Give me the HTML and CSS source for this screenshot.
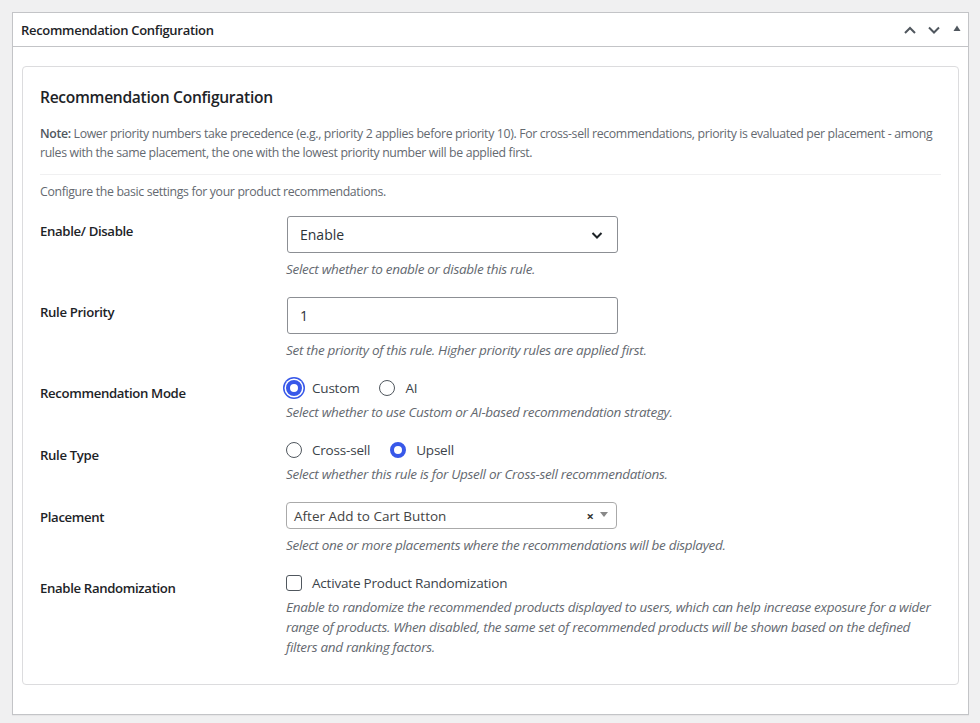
FILE: index.html
```html
<!DOCTYPE html>
<html lang="en">
<head>
    <meta charset="UTF-8">
    <meta name="viewport" content="width=device-width, initial-scale=1.0">
    <title>Recommendation Configuration</title>
    <link rel="stylesheet" href="styles.css">
</head>
<body>
    <div class="postbox">
        <div class="postbox-header">
            <h2 class="hndle">Recommendation Configuration</h2>
            <div class="handle-actions">
                <button class="handle-btn" type="button">
                    <svg width="14" height="14" viewBox="0 0 14 14"><path d="M2 10 L7 5 L12 10" fill="none" stroke="#50575e" stroke-width="2"/></svg>
                </button>
                <button class="handle-btn" type="button">
                    <svg width="14" height="14" viewBox="0 0 14 14"><path d="M2 4.5 L7 9.5 L12 4.5" fill="none" stroke="#50575e" stroke-width="2"/></svg>
                </button>
                <button class="handle-btn toggle" type="button">
                    <svg width="10" height="10" viewBox="0 0 10 10"><path d="M1.5 8 L5 2.5 L8.5 8 Z" fill="#50575e"/></svg>
                </button>
            </div>
        </div>
        <div class="inside">
            <div class="panel">
                <h3 class="panel-title">Recommendation Configuration</h3>
                <p class="note"><strong>Note:</strong> Lower priority numbers take precedence (e.g., priority 2 applies before priority 10). For cross-sell recommendations, priority is evaluated per placement - among rules with the same placement, the one with the lowest priority number will be applied first.</p>
                <p class="intro">Configure the basic settings for your product recommendations.</p>

                <table class="form-table">
                    <tr>
                        <th>Enable/ Disable</th>
                        <td>
                            <div class="select">
                                <span>Enable</span>
                                <svg width="14" height="14" viewBox="0 0 14 14"><path d="M2.5 5 L7 9.5 L11.5 5" fill="none" stroke="#1d2327" stroke-width="2"/></svg>
                            </div>
                            <p class="description">Select whether to enable or disable this rule.</p>
                        </td>
                    </tr>
                    <tr>
                        <th>Rule Priority</th>
                        <td>
                            <div class="input">1</div>
                            <p class="description">Set the priority of this rule. Higher priority rules are applied first.</p>
                        </td>
                    </tr>
                    <tr>
                        <th>Recommendation Mode</th>
                        <td>
                            <div class="choices">
                                <label class="choice"><span class="radio checked focus"></span>Custom</label>
                                <label class="choice"><span class="radio"></span>AI</label>
                            </div>
                            <p class="description tight">Select whether to use Custom or AI-based recommendation strategy.</p>
                        </td>
                    </tr>
                    <tr>
                        <th>Rule Type</th>
                        <td>
                            <div class="choices">
                                <label class="choice"><span class="radio"></span>Cross-sell</label>
                                <label class="choice"><span class="radio checked"></span>Upsell</label>
                            </div>
                            <p class="description tight">Select whether this rule is for Upsell or Cross-sell recommendations.</p>
                        </td>
                    </tr>
                    <tr>
                        <th>Placement</th>
                        <td>
                            <div class="select2">
                                <span>After Add to Cart Button</span>
                                <span class="clear">×</span>
                                <span class="arrow"></span>
                            </div>
                            <p class="description">Select one or more placements where the recommendations will be displayed.</p>
                        </td>
                    </tr>
                    <tr>
                        <th>Enable Randomization</th>
                        <td>
                            <label class="choice"><span class="checkbox"></span>Activate Product Randomization</label>
                            <p class="description tight">Enable to randomize the recommended products displayed to users, which can help increase exposure for a wider range of products. When disabled, the same set of recommended products will be shown based on the defined filters and ranking factors.</p>
                        </td>
                    </tr>
                </table>
            </div>
        </div>
    </div>
</body>
</html>
```

FILE: styles.css
```css
*{
    margin: 0;
    padding: 0;
    box-sizing: border-box;
}
body{
    background: #f0f0f1;
    font-family: "Open Sans", "Noto Sans", sans-serif;
    color: #3c434a;
    font-size: 13px;
    padding: 12px 11px 8px 12px;
}
.postbox{
    background: #fff;
    border: 1px solid #c3c4c7;
    box-shadow: 0 1px 1px rgba(0, 0, 0, 0.04);
}
.postbox-header{
    display: flex;
    align-items: center;
    justify-content: space-between;
    height: 34px;
    border-bottom: 1px solid #c3c4c7;
    padding-left: 8px;
}
.hndle{
    font-size: 13px;
    font-weight: 600;
    color: #1d2327;
    letter-spacing: -0.3px;
}
.handle-actions{
    display: flex;
    align-items: center;
    height: 100%;
}
.handle-btn{
    width: 24px;
    height: 33px;
    border: none;
    background: none;
    display: flex;
    align-items: center;
    justify-content: center;
}
.handle-btn.toggle{
    width: 22px;
    padding-bottom: 3px;
}
.inside{
    padding: 19px 9px 29px 9px;
}
.panel{
    border: 1px solid #dcdcde;
    border-radius: 4px;
    padding: 20px 17px 18px 17px;
}
.panel-title{
    font-size: 15.6px;
    line-height: 20px;
    font-weight: 600;
    color: #1d2327;
    letter-spacing: -0.3px;
    margin-bottom: 17px;
}
.note{
    font-size: 12.3px;
    line-height: 19px;
    color: #646970;
    letter-spacing: -0.35px;
    padding-bottom: 12px;
    border-bottom: 1px solid #f0f0f1;
    margin-bottom: 8px;
}
.note strong{
    font-weight: 600;
    color: #50575e;
}
.intro{
    font-size: 12.3px;
    line-height: 18px;
    color: #646970;
    letter-spacing: -0.35px;
    margin-bottom: 6px;
}
.form-table{
    border-collapse: collapse;
    width: 100%;
}
.form-table th{
    width: 246px;
    text-align: left;
    vertical-align: top;
    font-size: 13.2px;
    line-height: 20px;
    font-weight: 600;
    color: #1d2327;
    letter-spacing: -0.35px;
    padding: 14px 0 0 0;
}
.form-table td{
    vertical-align: top;
    padding: 9px 0 9px 0;
}
.select, .input{
    width: 331px;
    height: 37px;
    border: 1px solid #8c8f94;
    border-radius: 3px;
    display: flex;
    align-items: center;
    justify-content: space-between;
    padding: 0 13px 0 12px;
    font-size: 14px;
    color: #2c3338;
    margin-left: 1px;
}
.description{
    font-style: italic;
    font-size: 13.5px;
    color: #646970;
    letter-spacing: -0.3px;
    line-height: 20px;
    margin-top: 6px;
}
.description.tight{
    margin-top: 4px;
}
.choices{
    display: flex;
    gap: 20px;
}
.choice{
    display: flex;
    align-items: center;
    gap: 10px;
    font-size: 13.5px;
    color: #3c434a;
    letter-spacing: -0.2px;
    height: 20px;
}
.radio{
    width: 16px;
    height: 16px;
    border: 1px solid #50575e;
    border-radius: 50%;
    display: inline-block;
    background: #fff;
}
.radio.checked{
    border: 4px solid #3858e9;
}
.radio.focus{
    box-shadow: 0 0 0 1.5px #fff, 0 0 0 3px #3858e9;
}
.select2{
    width: 331px;
    height: 27px;
    border: 1px solid #aaa;
    border-radius: 4px;
    display: flex;
    align-items: center;
    padding: 0 8px 0 7px;
    font-size: 13.5px;
    color: #444;
}
.select2 span:first-child{
    flex: 1;
}
.select2 .clear{
    font-weight: 700;
    font-size: 13px;
    color: #333;
    margin-right: 6px;
}
.select2 .arrow{
    width: 0;
    height: 0;
    border-left: 4px solid transparent;
    border-right: 4px solid transparent;
    border-top: 5px solid #888;
    margin-bottom: 3px;
}
.checkbox{
    width: 16px;
    height: 16px;
    border: 1px solid #50575e;
    border-radius: 3px;
    display: inline-block;
}
```
